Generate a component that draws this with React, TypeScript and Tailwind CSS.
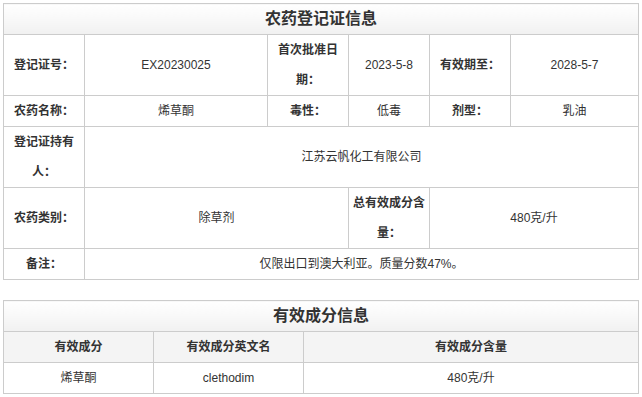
import React from "react";

const td = "border border-[#cccccc] px-[2px] py-0 text-center align-middle leading-[30px] text-[12px] text-[#333333]";
const lb = td + " font-bold";

export default function App() {
  return (
    <div
      className="bg-white w-[642px] h-[397px] overflow-hidden pt-[3px] pl-[3px]"
      style={{ fontFamily: '"Liberation Sans", "Noto Sans CJK SC", sans-serif' }}
    >
      <table className="table-fixed border-collapse w-[635px]">
        <colgroup>
          <col className="w-[81px]" />
          <col className="w-[183px]" />
          <col className="w-[81px]" />
          <col className="w-[81px]" />
          <col className="w-[81px]" />
          <col className="w-[128px]" />
        </colgroup>
        <tbody>
          <tr>
            <th colSpan={6} className="border border-[#cccccc] h-[30px] leading-[30px] text-[16px] font-bold text-[#333333] text-center bg-gradient-to-b from-[#ffffff] to-[#f1f1f1]">
              农药登记证信息
            </th>
          </tr>
          <tr>
            <td className={lb}>登记证号：</td>
            <td className={td}>EX20230025</td>
            <td className={lb}>首次批准日期：</td>
            <td className={td}>2023-5-8</td>
            <td className={lb}>有效期至：</td>
            <td className={td}>2028-5-7</td>
          </tr>
          <tr>
            <td className={lb}>农药名称：</td>
            <td className={td}>烯草酮</td>
            <td className={lb}>毒性：</td>
            <td className={td}>低毒</td>
            <td className={lb}>剂型：</td>
            <td className={td}>乳油</td>
          </tr>
          <tr>
            <td className={lb}>登记证持有人：</td>
            <td className={td} colSpan={5}>江苏云帆化工有限公司</td>
          </tr>
          <tr>
            <td className={lb}>农药类别：</td>
            <td className={td} colSpan={2}>除草剂</td>
            <td className={lb}>总有效成分含量：</td>
            <td className={td} colSpan={2}>480克/升</td>
          </tr>
          <tr>
            <td className={lb}>备注：</td>
            <td className={td} colSpan={5}>仅限出口到澳大利亚。质量分数47%。</td>
          </tr>
        </tbody>
      </table>

      <table className="table-fixed border-collapse w-[635px] mt-[20px]">
        <colgroup>
          <col className="w-[150px]" />
          <col className="w-[150px]" />
          <col className="w-[335px]" />
        </colgroup>
        <tbody>
          <tr>
            <th colSpan={3} className="border border-[#cccccc] h-[30px] leading-[30px] text-[16px] font-bold text-[#333333] text-center bg-gradient-to-b from-[#ffffff] to-[#f1f1f1]">
              有效成分信息
            </th>
          </tr>
          <tr className="bg-[#f4f4f4]">
            <td className={lb}>有效成分</td>
            <td className={lb}>有效成分英文名</td>
            <td className={lb}>有效成分含量</td>
          </tr>
          <tr>
            <td className={td}>烯草酮</td>
            <td className={td}>clethodim</td>
            <td className={td}>480克/升</td>
          </tr>
        </tbody>
      </table>
    </div>
  );
}
